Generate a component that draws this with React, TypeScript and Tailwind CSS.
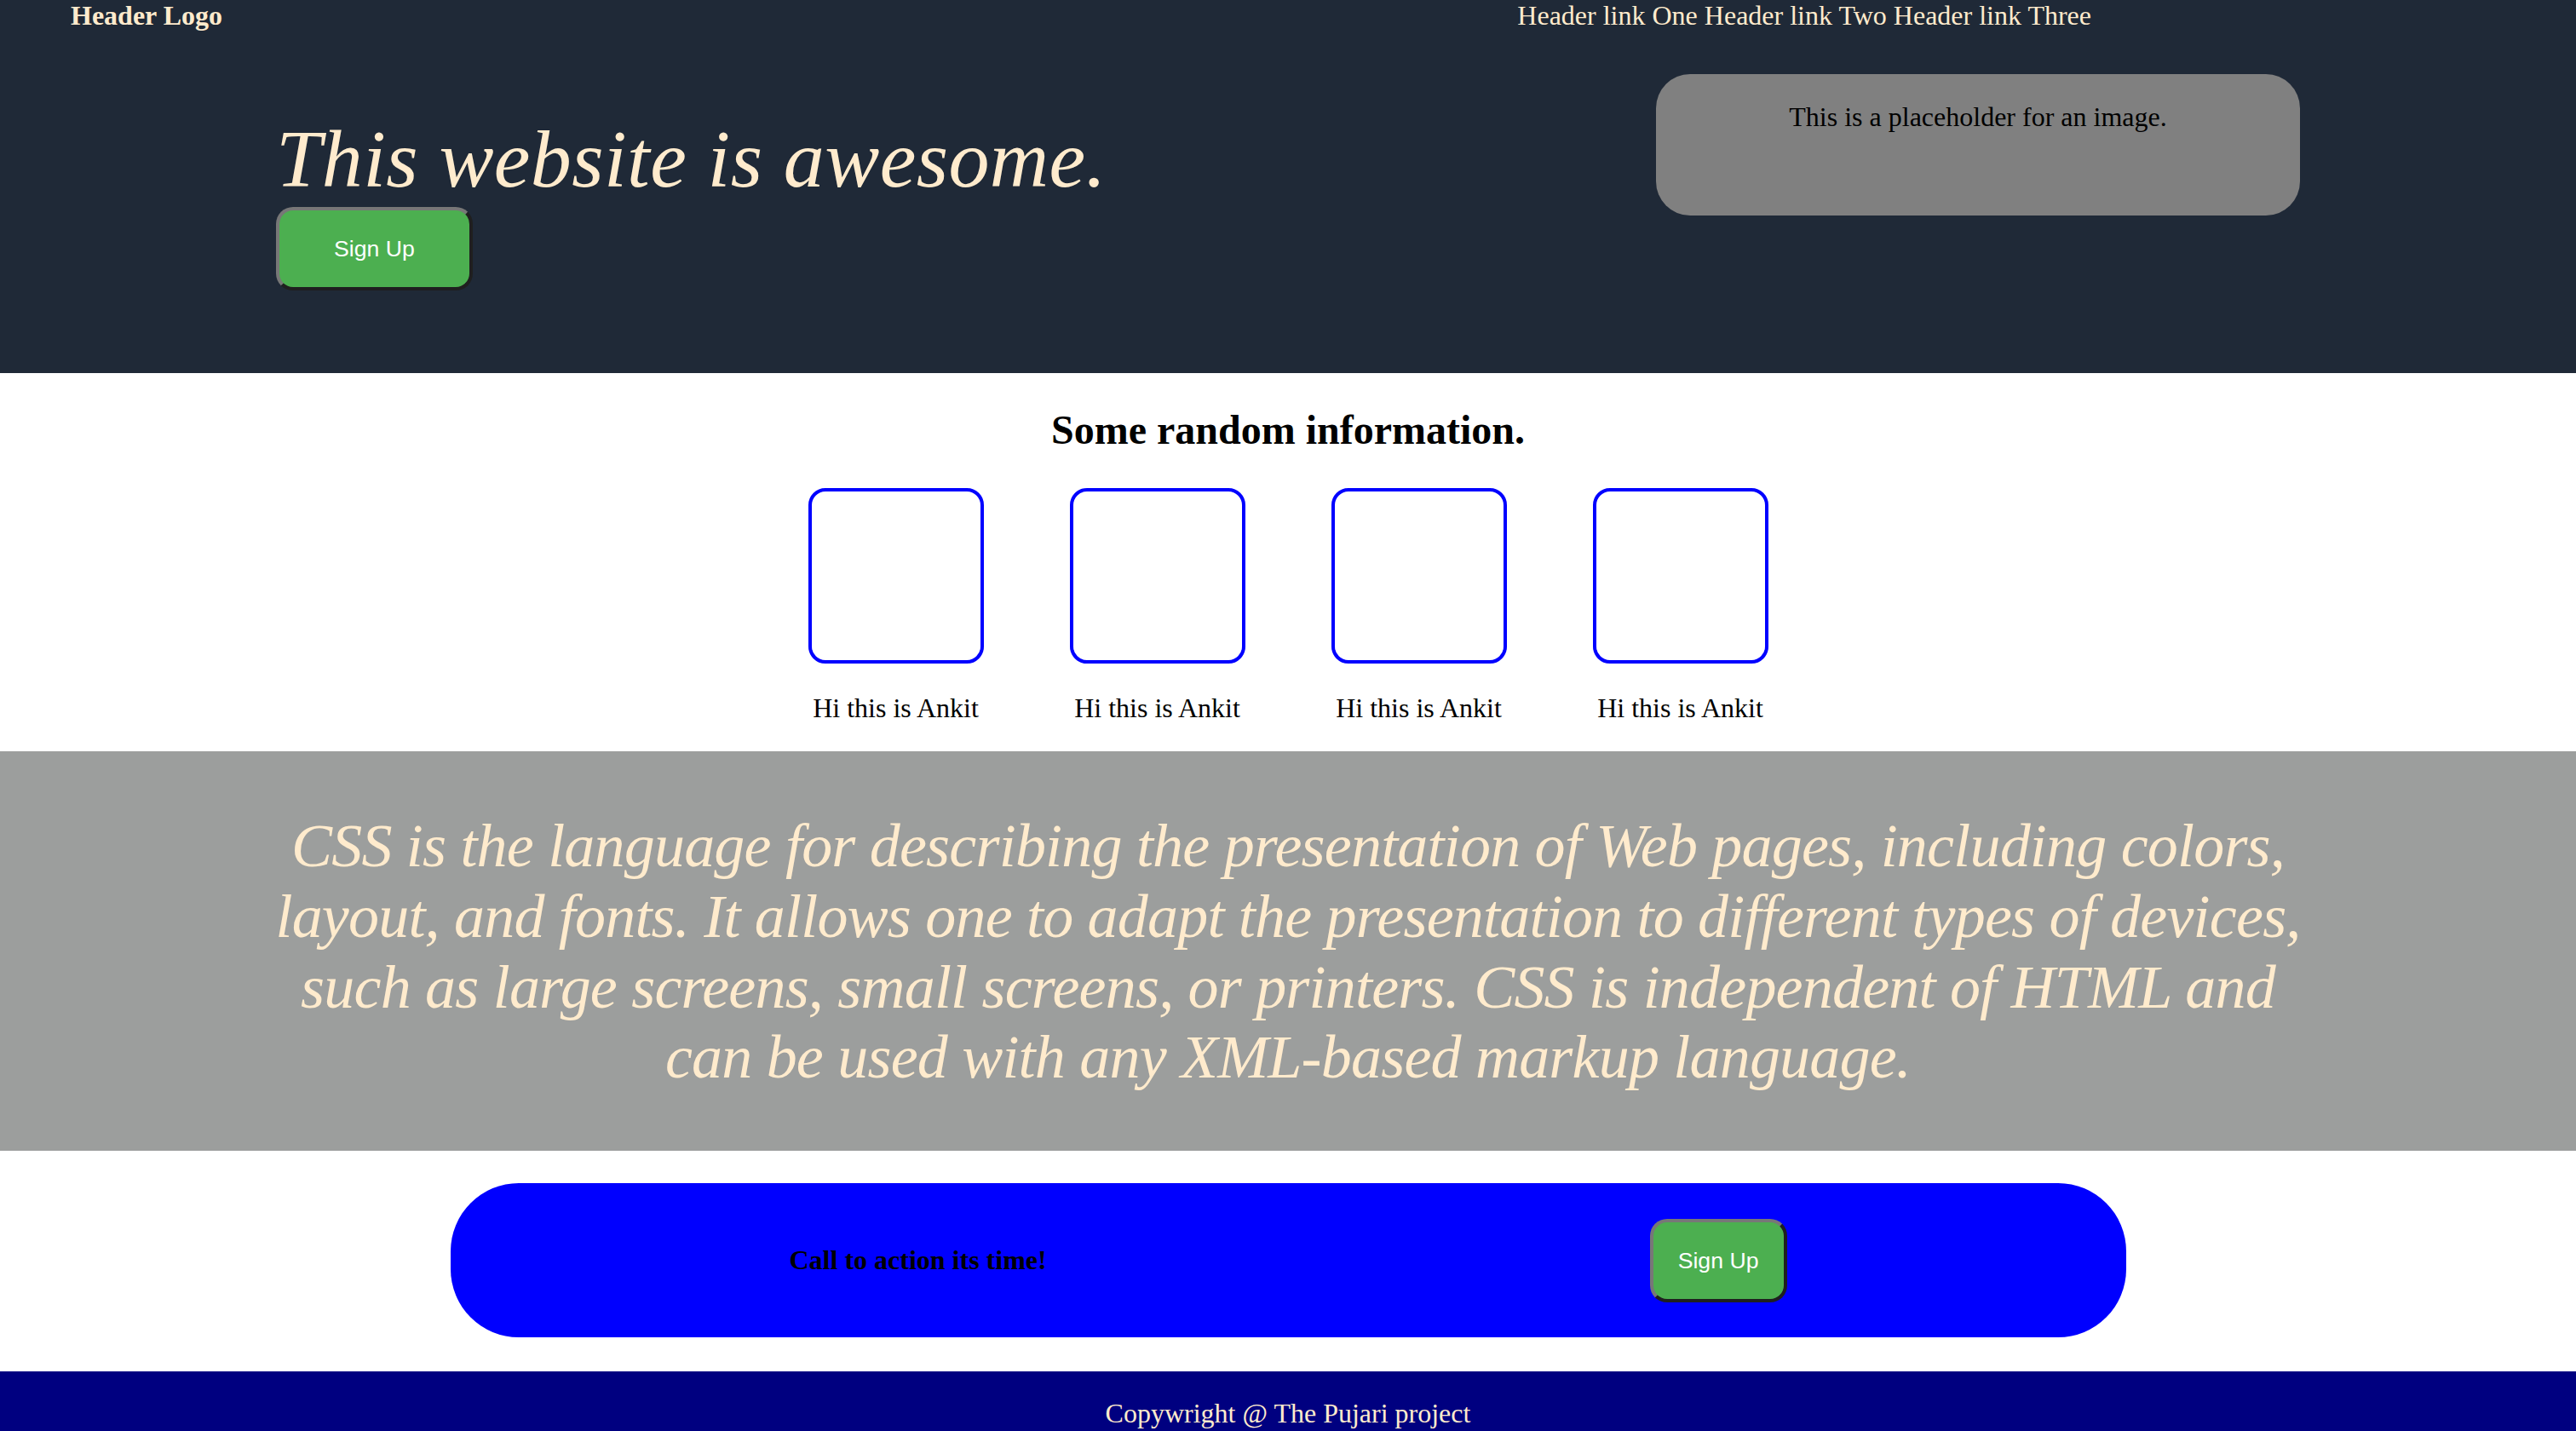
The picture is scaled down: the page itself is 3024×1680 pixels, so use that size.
export default function App() {
  return (
    <div className="min-h-screen bg-white font-['Liberation_Serif','Times_New_Roman',serif] text-[32px] text-black">
      {/* header + hero */}
      <header className="h-[438px] bg-[#1f2937] text-[#ffebcd]">
        <nav className="flex justify-between pl-[83px] pr-[569px] leading-[37px]">
          <div className="font-bold">Header Logo</div>
          <div>
            <a>Header link One</a> <a>Header link Two</a> <a>Header link Three</a>
          </div>
        </nav>

        <div className="mt-[50px] flex items-start justify-between px-[324px]">
          <div className="flex flex-col items-start">
            <h1 className="mt-[45px] text-[96px] italic leading-[110px] tracking-[0.4px]">This website is awesome.</h1>
            <button className="mt-px rounded-[20px] border-4 border-t-[#777777] border-l-[#777777] border-b-[#1f1f1f] border-r-[#1f1f1f] bg-[#4caf50] px-[64px] py-[30px] font-['Liberation_Sans',Arial,sans-serif] text-[26.67px] leading-[30px] text-white">
              Sign Up
            </button>
          </div>
          <div className="h-[166px] w-[756px] rounded-[40px] bg-[#808080] pt-[32px] text-center text-black leading-[37px]">
            This is a placeholder for an image.
          </div>
        </div>
      </header>

      {/* info cards */}
      <section className="pt-[39px] pb-[32px] text-center">
        <h2 className="text-[48px] font-bold leading-[55px]">Some random information.</h2>
        <div className="mt-[41px] flex justify-center gap-[101px]">
          {[0, 1, 2, 3].map((i) => (
            <div key={i} className="flex w-[206px] flex-col items-center">
              <div className="h-[206px] w-[206px] rounded-[20px] border-4 border-[#0000ff]" />
              <p className="mt-[34px] whitespace-nowrap leading-[37px]">Hi this is Ankit</p>
            </div>
          ))}
        </div>
      </section>

      {/* quote */}
      <section className="bg-[#9c9e9d] pt-[70px] pb-[68px] text-center">
        <p className="text-[72px] italic leading-[82.8px] tracking-[-0.8px] text-[#ffebcd]">
          CSS is the language for describing the presentation of Web pages, including colors,
          <br />
          layout, and fonts. It allows one to adapt the presentation to different types of devices,
          <br />
          such as large screens, small screens, or printers. CSS is independent of HTML and
          <br />
          can be used with any XML-based markup language.
        </p>
      </section>

      {/* call to action */}
      <section className="pt-[38px] pb-[40px]">
        <div className="mx-auto flex h-[181px] w-[1967px] items-center justify-between rounded-[80px] bg-[#0000ff] px-[398px]">
          <div className="font-bold leading-[37px]">Call to action its time!</div>
          <button className="rounded-[20px] border-4 border-t-[#777777] border-l-[#777777] border-b-[#1f1f1f] border-r-[#1f1f1f] bg-[#4caf50] px-[29px] py-[30px] font-['Liberation_Sans',Arial,sans-serif] text-[26.67px] leading-[30px] text-white">
            Sign Up
          </button>
        </div>
      </section>

      <footer className="bg-[#000080] py-[31px] text-center leading-[37px] text-[#ffebcd]">
        Copywright @ The Pujari project
      </footer>
    </div>
  );
}
